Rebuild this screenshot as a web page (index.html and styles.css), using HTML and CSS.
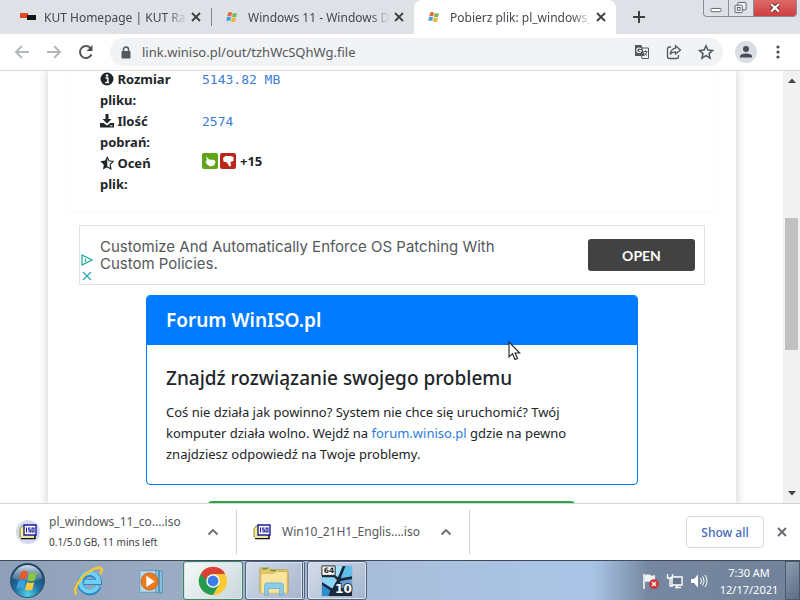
FILE: index.html
```html
<!DOCTYPE html>
<html lang="pl">
<head>
    <meta charset="UTF-8">
    <meta name="viewport" content="width=device-width, initial-scale=1.0">
    <title>Pobierz plik</title>
    <link rel="stylesheet" href="styles.css">
</head>
<body>

    <svg class="defs" width="0" height="0" aria-hidden="true">
        <symbol id="winflag" viewBox="0 0 12 12">
            <path fill="#e8623a" d="M2.2 1.6Q4 .6 6 1.6L5.2 5.4Q3.400 4.500 1.300 5.400z"/>
            <path fill="#7cb856" d="M6.800 2Q8.800 2.900 11 2L10.100 6Q8 6.700 5.900 5.800z"/>
            <path fill="#3ba3dc" d="M1.100 6.200Q3 5.300 5 6.200L4.200 10Q2.300 9.100.2 10z"/>
            <path fill="#f0b440" d="M5.800 6.600Q7.800 7.500 9.900 6.700L9 10.700Q7 11.400 5 10.500z"/>
        </symbol>
        <symbol id="cross" viewBox="0 0 10 10">
            <path d="M1 1l8 8M9 1l-8 8" fill="none" stroke="currentColor" stroke-width="1.800"/>
        </symbol>
        <symbol id="chevron" viewBox="0 0 12 8">
            <path d="M1.500 6.500L6 2l4.500 4.500" fill="none" stroke="currentColor" stroke-width="1.800"/>
        </symbol>
        <symbol id="iso" viewBox="0 0 18 16">
            <path d="M1 5l2-3h4v11H1z" fill="#f5f08a" stroke="#8a8630"/>
            <path d="M2 14.500h14V10" fill="none" stroke="#111" stroke-width="1.500"/>
            <path d="M2 11h13v3H2z" fill="#eeeaa0"/>
            <path d="M5 1h12v10H5z" fill="#fff" stroke="#1a1a9a" stroke-width="1.400"/>
            <path d="M7.500 3.500v5M11.500 4H9.700v2h1.600v2H9.300M13 4h2v4h-2z" fill="none" stroke="#1a1a9a" stroke-width="1.100"/>
        </symbol>
    </svg>

    <!-- tab strip -->
    <header class="tabs">
        <div class="tab">
            <svg class="favicon" viewBox="0 0 16 12"><path fill="#e04a20" d="M0 2h8v5H0z"/><path fill="#111" d="M7 4h9v5H7z"/></svg>
            <span class="tab-title">KUT Homepage | KUT Rad</span>
            <button class="tab-close" aria-label="Close tab"><svg><use href="#cross"/></svg></button>
        </div>
        <div class="tab">
            <svg class="favicon"><use href="#winflag"/></svg>
            <span class="tab-title">Windows 11 - Windows D</span>
            <button class="tab-close" aria-label="Close tab"><svg><use href="#cross"/></svg></button>
        </div>
        <div class="tab active">
            <svg class="favicon"><use href="#winflag"/></svg>
            <span class="tab-title">Pobierz plik: pl_windows_</span>
            <button class="tab-close" aria-label="Close tab"><svg><use href="#cross"/></svg></button>
        </div>
        <button class="new-tab" aria-label="New tab">
            <svg viewBox="0 0 12 12"><path d="M6 0v12M0 6h12" stroke="#3c4043" stroke-width="2"/></svg>
        </button>
        <div class="window-controls">
            <button aria-label="Minimize"><svg viewBox="0 0 26 17"><rect x="7.500" y="9" width="11" height="3.500" rx="1" fill="#fff" stroke="#555b66"/></svg></button>
            <button aria-label="Restore"><svg viewBox="0 0 26 17"><g fill="#f4f5f7" stroke="#555b66"><rect x="9.500" y="2.500" width="9" height="8" rx="1"/><rect x="6.500" y="5.500" width="8" height="8" rx="1"/><rect x="9" y="8" width="3" height="3"/></g></svg></button>
            <button class="close" aria-label="Close"><svg viewBox="0 0 42 17"><path d="M17 4.500l8 7.500M25 4.500l-8 7.500" stroke="#6b2a2a" stroke-width="4.500"/><path d="M17 4.500l8 7.500M25 4.500l-8 7.500" stroke="#fff" stroke-width="2.500"/></svg></button>
        </div>
    </header>

    <!-- address bar -->
    <nav class="toolbar">
        <button class="dim" aria-label="Back"><svg viewBox="0 0 16 16"><path d="M15 8H2M8 2L2 8l6 6"/></svg></button>
        <button class="dim" aria-label="Forward"><svg viewBox="0 0 16 16"><path d="M1 8h13M8 2l6 6-6 6"/></svg></button>
        <button aria-label="Reload"><svg viewBox="0 0 16 16"><path d="M13.500 10.500A6 6 0 1 1 12.800 4.400" stroke-width="2"/><path d="M14.500 1v6h-6z" fill="#4a4d51" stroke="none"/></svg></button>
        <div class="omnibox">
            <svg class="lock" viewBox="0 0 10 13"><path d="M2.500 6V3.500a2.500 2.500 0 0 1 5 0V6" fill="none" stroke="#54575b" stroke-width="1.500"/><rect x="0.500" y="5" width="9" height="7.500" rx="1" fill="#54575b"/></svg>
            <input type="text" aria-label="Address" value="link.winiso.pl/out/tzhWcSQhWg.file">
            <button aria-label="Translate"><svg viewBox="0 0 16 16"><path d="M6 4h8.500v10.500H8z" stroke-width="1"/><path d="M1 1h6.500l3 11H1z" fill="#54575b" stroke="none"/><path d="M7 5A2.300 2.300 0 1 0 7 7.500V6.500H5" stroke="#fff" stroke-width="1.100"/><path d="M9.500 7.500h4M11.500 6.500v1M12.800 7.500q-.5 2.500-2.500 4M10.500 9q1 2 2.500 2.500" stroke-width="1"/></svg></button>
            <button aria-label="Share"><svg viewBox="0 0 16 16"><path d="M5 3H3.500Q1.500 3 1.500 5v7.500q0 2 2 2h7q2 0 2-2V11" stroke-width="1.300"/><path d="M9.500 1.800L14.500 6l-5 4V7.800Q6 7.800 4.200 10.500 4.800 5 9.500 4.200z" stroke-width="1.300"/></svg></button>
            <button aria-label="Bookmark"><svg viewBox="0 0 16 16"><path d="M8 1.800l1.900 4.300 4.600.4-3.500 3.100 1.100 4.600L8 11.700l-4.100 2.500L5 9.600 1.500 6.500l4.600-.4z" stroke-width="1.500"/></svg></button>
        </div>
        <button class="profile" aria-label="Profile"><svg viewBox="0 0 16 16"><circle cx="8" cy="5" r="3" fill="#4a4d55" stroke="none"/><path d="M2 13.500v-1.500Q2.500 9.500 8 9.500t6 2.500v1.500z" fill="#4a4d55" stroke="none"/></svg></button>
        <button class="menu" aria-label="Menu"><svg viewBox="0 0 16 16"><g fill="#4a4d51" stroke="none"><circle cx="8" cy="3" r="1.600"/><circle cx="8" cy="8" r="1.600"/><circle cx="8" cy="13" r="1.600"/></g></svg></button>
    </nav>

    <!-- page -->
    <div class="viewport">
        <main class="page">
            <div class="sheet">
                <section class="file-info">
                    <table>
                        <tr>
                            <th scope="row"><svg viewBox="0 0 14 14"><circle cx="7" cy="7" r="6.500" fill="#212529"/><path d="M5.500 6h2.300v4.500M5.200 10.500h3.900" fill="none" stroke="#fff" stroke-width="1.500"/><circle cx="7" cy="3.500" r="1.200" fill="#fff"/></svg> Rozmiar pliku:</th>
                            <td><code>5143.82 MB</code></td>
                        </tr>
                        <tr>
                            <th scope="row"><svg viewBox="0 0 14 14"><path d="M5.500 0h3v5h3L7 9.500 2.500 5h3zM0 9h3.500L7 11.500 10.500 9H14v4.500H0z" fill="#212529"/><path d="M10 11.800h2.500" stroke="#fff"/></svg> Ilość pobrań:</th>
                            <td><code>2574</code></td>
                        </tr>
                        <tr>
                            <th scope="row"><svg viewBox="0 0 14 14"><path d="M7 .8l1.900 4 4.400.6-3.200 3 .8 4.400L7 10.700" fill="none" stroke="#212529" stroke-width="1.200"/><path d="M7.300.2v11L3 13.500l.8-4.800L.3 5.300l4.800-.7z" fill="#212529"/></svg> Oceń plik:</th>
                            <td class="votes">
                                <button class="up" aria-label="Vote up"><svg viewBox="0 0 16 16"><path fill="#fff" d="M4 3l3 3.500 5.500.5 1 2-1.500 3.500-4 1L4.500 11 3.500 8 5 7.500z"/></svg></button>
                                <button class="down" aria-label="Vote down"><svg viewBox="0 0 16 16"><path fill="#fff" d="M3 5l2.500-2h5L13.500 4v4l-3 1 .5 4-1.500.5L7 9.500 3.500 8.500z"/></svg></button>
                                <b>+15</b>
                            </td>
                        </tr>
                    </table>
                </section>

                <aside class="ad">
                    <div class="ad-marks">
                        <svg viewBox="0 0 12 12"><path d="M1 1l10 5-10 5z M4.500 4.500v3.500" fill="none" stroke="#1aa7a0" stroke-width="1.200"/></svg>
                        <svg viewBox="0 0 12 12"><path d="M2 2l8 8M10 2l-8 8" stroke="#2aa5b8" stroke-width="1.200"/></svg>
                    </div>
                    <p>Customize And Automatically Enforce OS Patching With Custom Policies.</p>
                    <button>OPEN</button>
                </aside>

                <section class="forum">
                    <h2>Forum WinISO.pl</h2>
                    <div class="forum-body">
                        <h3>Znajdź rozwiązanie swojego problemu</h3>
                        <p>Coś nie działa jak powinno? System nie chce się uruchomić? Twój komputer działa wolno. Wejdź na <a href="#">forum.winiso.pl</a> gdzie na pewno znajdziesz odpowiedź na Twoje problemy.</p>
                    </div>
                </section>

                <div class="next-card"></div>
            </div>
        </main>
        <div class="scrollbar">
            <svg viewBox="0 0 8 5"><path d="M0 5l4-4.500L8 5z" fill="#444"/></svg>
            <div class="track"><div class="thumb"></div></div>
            <svg viewBox="0 0 8 5"><path d="M0 0l4 4.500L8 0z" fill="#444"/></svg>
        </div>
        <svg class="cursor" viewBox="0 0 13 20"><path d="M1 1v15l3.500-3.300L7 18.500l2.500-1L7 12h4.800z" fill="#fff" stroke="#222" stroke-width="1.100"/></svg>
    </div>

    <!-- downloads -->
    <footer class="downloads">
        <div class="download">
            <span class="disc"><svg class="iso"><use href="#iso"/></svg></span>
            <div class="download-text">
                <span class="name">pl_windows_11_co....iso</span>
                <small>0.1/5.0 GB, 11 mins left</small>
            </div>
            <button aria-label="More"><svg><use href="#chevron"/></svg></button>
        </div>
        <div class="download">
            <span class="disc plain"><svg class="iso"><use href="#iso"/></svg></span>
            <div class="download-text">
                <span class="name">Win10_21H1_Englis....iso</span>
            </div>
            <button aria-label="More"><svg><use href="#chevron"/></svg></button>
        </div>
        <button class="show-all">Show all</button>
        <button class="close-bar" aria-label="Close downloads"><svg><use href="#cross"/></svg></button>
    </footer>

    <!-- taskbar -->
    <div class="taskbar">
        <button class="start" aria-label="Start">
            <svg viewBox="0 0 38 38">
                <defs>
                    <radialGradient id="orb" cx="50%" cy="90%" r="85%"><stop offset="0" stop-color="#4fd0ec"/><stop offset=".45" stop-color="#1f6f9f"/><stop offset="1" stop-color="#1c3a58"/></radialGradient>
                    <linearGradient id="gloss" x2="0" y2="1"><stop offset="0" stop-color="#e6f2f8" stop-opacity=".9"/><stop offset="1" stop-color="#8fb6cc" stop-opacity=".25"/></linearGradient>
                </defs>
                <circle cx="19" cy="19" r="17.500" fill="url(#orb)" stroke="#33506c"/>
                <path d="M3.500 17a15.600 15.600 0 0 1 31 0Q19 23 3.500 17z" fill="url(#gloss)"/>
                <path fill="#e8582c" d="M12 10.500q4-2.500 7.500-.5l-2 8q-3.500-2-7.500 0z"/>
                <path fill="#8cc63c" d="M21 10.800q4 2 7.500 0l-2 8q-3.500 2-7.500 0z"/>
                <path fill="#3aa0e0" d="M9.500 19.700q4-2 7.500 0l-2 7.800q-3.500-2-7.500.2z"/>
                <path fill="#fcc93a" d="M18.500 20.500q4 2 7.500 0l-2 7.800q-3.500 2-7.500 0z"/>
            </svg>
        </button>
        <button class="task" aria-label="Internet Explorer">
            <svg viewBox="0 0 34 34">
                <path d="M27 22.500A9.800 9.800 0 1 1 27.500 18H12" fill="none" stroke="#2d86c4" stroke-width="6.500"/>
                <path d="M26.500 22.500A9.800 9.800 0 1 1 27.500 18H12" fill="none" stroke="#6fd0f4" stroke-width="4.500"/>
                <path d="M3.500 31C-1 27 8 12 18 6.500 24 2.500 30 1.500 30.500 5q.3 2-1.500 4.500" fill="none" stroke="#f2c636" stroke-width="2.800"/>
            </svg>
        </button>
        <button class="task" aria-label="Media Player">
            <svg viewBox="0 0 34 34">
                <path d="M5 6h21v23H5z" fill="#b9d6e4" stroke="#5d9fc0"/>
                <path d="M22 5l3 1v24l-3-1zM26 6l3 1v23l-3-1z" fill="#8bc3dc" stroke="#4489ab" stroke-width=".8"/>
                <circle cx="15.500" cy="17.500" r="9" fill="#ee7a1c" stroke="#c95f16"/>
                <path d="M12 11.500l9 6-9 6z" fill="#fff"/>
            </svg>
        </button>
        <button class="task open current" aria-label="Chrome">
            <svg viewBox="0 0 34 34">
                <circle cx="17" cy="17" r="15" fill="#fbc934"/>
                <path d="M4 9.500A15 15 0 0 0 17 32l6.500-11.500L17 17z" fill="#259a50"/>
                <path d="M4 9.500L10.500 20.700 17 10z" fill="#259a50"/>
                <path d="M4 9.500A15 15 0 0 1 30 9.500H17a7.500 7.500 0 0 0-7.300 6z" fill="#dc3f33"/>
                <circle cx="17" cy="17" r="7.200" fill="#fff"/><circle cx="17" cy="17" r="5.800" fill="#3f7ee8"/>
            </svg>
        </button>
        <button class="task open stack" aria-label="Explorer">
            <svg viewBox="0 0 34 34">
                <path d="M2 5q0-2 2-2h8l2 2h16q2 0 2 2v22H2z" fill="#e7c765" stroke="#b8953c" stroke-width=".8"/>
                <path d="M5 4h5M13 6h6M22 7h6" stroke="#4f9a60" stroke-width="1.500"/>
                <path d="M3 9h14l2-2h12v23H3z" fill="#f8e6a0" stroke="#d3b35a" stroke-width=".8"/>
                <path d="M7 32V22q0-3 3-3h14q3 0 3 3v10h-4v-7H11v7z" fill="#8cccea" stroke="#5fa9cf" stroke-width=".8"/>
            </svg>
        </button>
        <button class="task open" aria-label="Windows 10 x64">
            <svg viewBox="0 0 34 34">
                <path d="M1 1h32v32H1z" fill="#17293a"/>
                <path d="M18 1h5l-5 12-3-2V1z" fill="#a8e0f8"/>
                <path d="M26 1h7v11L21 14z" fill="#5fbdec"/>
                <path d="M1 13h13l3 3-5 9-11-7z" fill="#8fd6f6"/>
                <path d="M1 21l9 6-2 6H1z" fill="#2a8ed0"/>
                <path d="M21 17l12-2v10l-15-1z" fill="#6c9fd4"/>
                <path d="M1 1h14v10H1z" fill="#fff" stroke="#222"/>
                <text class="badge-64" x="3" y="9">64</text>
                <text class="badge-10" x="15" y="30">10</text>
            </svg>
        </button>
        <div class="tray">
            <svg viewBox="0 0 18 18"><path d="M2 2v15" stroke="#fff" stroke-width="1.500"/><path d="M3 3q3-1.500 5 0t5 0v7q-3 1-5 0t-5 0z" fill="#eef3f8"/><circle cx="12" cy="12" r="4.800" fill="#d5302f"/><path d="M10 10l4 4M14 10l-4 4" stroke="#fff" stroke-width="1.500"/></svg>
            <svg viewBox="0 0 18 18"><path d="M6 5h10v8H6zM9 15.500h6M11 13v2.500" fill="#64748a" stroke="#fff" stroke-width="1.400"/><path d="M1.500 2v4h5V2M4 6v8h3" fill="none" stroke="#fff" stroke-width="1.300"/></svg>
            <svg viewBox="0 0 18 18"><path d="M1 7h3l4-4.500v13L4 11H1z" fill="#fff"/><path d="M10.500 6q2 3 0 6M12.700 4.500q3 4.500 0 9M15 3q4 6 0 12" fill="none" stroke="#fff"/></svg>
        </div>
        <div class="clock"><span>7:30 AM</span><span>12/17/2021</span></div>
        <button class="show-desktop" aria-label="Show desktop"></button>
    </div>

</body>
</html>
```
FILE: styles.css
```css
*, *::before, *::after {
    box-sizing: border-box;
}

body {
    display: flex;
    flex-direction: column;
    height: 100vh;
    margin: 0;
    overflow: hidden;
    font-family: 'Noto Sans', 'Open Sans', sans-serif;
    font-size: 13px;
    color: #212529;
    background-color: white;
}

button {
    display: flex;
    align-items: center;
    justify-content: center;
    flex: none;
    padding: 0;
    border: none;
    background: none;
    font-family: inherit;
    cursor: pointer;
}

.defs {
    position: absolute;
}

/* tab strip */
.tabs {
    position: relative;
    display: flex;
    flex: none;
    height: 34px;
    padding-left: 10px;
    background-color: #dee1e6;
}

.tab {
    display: flex;
    align-items: center;
    width: 202px;
    padding: 0 10px 0 12px;
    font-size: 12px;
    color: #45494e;
}

.tab:first-child {
    border-right: 1px solid #85898f;
    height: 18px;
    padding-left: 10px;
    margin-top: 8px;
}

.tab.active {
    background-color: white;
    border-radius: 8px 8px 0 0;
}

.favicon {
    flex: none;
    width: 16px;
    height: 12px;
    margin-right: 8px;
}

.tab-title {
    flex: 1;
    overflow: hidden;
    white-space: nowrap;
    -webkit-mask-image: linear-gradient(to right, black 86%, transparent);
    mask-image: linear-gradient(to right, black 86%, transparent);
}

.tab-close {
    width: 10px;
    height: 16px;
    margin-left: 4px;
    color: #3c4043;
}

.tab-close svg {
    width: 10px;
    height: 10px;
}

.new-tab {
    width: 46px;
}

.new-tab svg {
    width: 12px;
    height: 12px;
}

.window-controls {
    position: absolute;
    top: 0;
    right: 3px;
    display: flex;
    height: 17px;
    border: 1px solid #8a8e96;
    border-top: none;
    border-radius: 0 0 4px 4px;
    overflow: hidden;
}

.window-controls button {
    width: 25px;
    border-right: 1px solid #8a8e96;
}

.window-controls .close {
    width: 42px;
    border: none;
    background: linear-gradient(#dc6a68, #cf3d40);
}

.window-controls svg {
    width: 100%;
    height: 16px;
}

/* address bar */
.toolbar {
    display: flex;
    flex: none;
    align-items: center;
    height: 37px;
    padding: 0 12px 0 14px;
    border-bottom: 1px solid #d5d7da;
}

.toolbar svg {
    width: 16px;
    height: 16px;
    fill: none;
    stroke: #54575b;
    stroke-width: 2;
}

.toolbar > button {
    width: 16px;
    margin-right: 16px;
}

.toolbar > .dim svg {
    stroke: #b4b7ba;
}

.omnibox {
    display: flex;
    flex: 1;
    align-items: center;
    gap: 16px;
    height: 28px;
    padding: 0 9px 0 11px;
    margin-right: 12px;
    border-radius: 14px;
    background-color: #f1f3f4;
}

.toolbar .lock {
    width: 10px;
    height: 13px;
    stroke: none;
}

.omnibox input {
    flex: 1;
    min-width: 0;
    padding: 0;
    margin-left: -5px;
    border: none;
    outline: none;
    background: none;
    font-family: inherit;
    font-size: 13px;
    color: #54575b;
}

.toolbar > .profile {
    width: 22px;
    height: 22px;
    margin-right: 13px;
    border-radius: 50%;
    background-color: #dadde3;
}

.toolbar > .menu {
    margin-right: 2px;
}

/* page */
.viewport {
    position: relative;
    display: flex;
    flex: 1;
    min-height: 0;
    overflow: hidden;
}

.page {
    flex: 1;
    overflow: hidden;
    padding: 0 47px 0 48px;
}

.sheet {
    min-height: 100%;
    padding: 0 18px;
    box-shadow: 0 0 10px rgba(0, 0, 0, 0.2);
}

.file-info {
    height: 144px;
    padding-left: 33px;
    border: 1px solid #fafafa;
    border-top: none;
}

.file-info table {
    margin-top: -2px;
    border-collapse: collapse;
    line-height: 21px;
}

.file-info th {
    width: 102px;
    padding: 0 24px 0 0;
    text-align: left;
    font-weight: bold;
    vertical-align: top;
}

.file-info th svg {
    width: 14px;
    height: 14px;
    vertical-align: -2px;
}

.file-info td {
    padding: 0;
    vertical-align: top;
}

.file-info code {
    font-family: 'DejaVu Sans Mono', monospace;
    font-size: 13px;
    color: #3b7dd8;
}

.votes {
    display: flex;
    align-items: center;
    gap: 2px;
    height: 16px;
}

.votes button {
    width: 16px;
    height: 16px;
    border-radius: 2px;
}

.votes .up {
    background-color: #5fa517;
}

.votes .down {
    background-color: #b9261c;
}

.votes b {
    margin-left: 2px;
}

.ad {
    display: flex;
    align-items: center;
    height: 60px;
    margin: 12px 13px 10px;
    border: 1px solid #dfe1e5;
}

.ad-marks {
    display: flex;
    flex-direction: column;
    align-self: flex-end;
    gap: 4px;
    width: 20px;
    padding: 0 0 2px 1px;
}

.ad-marks svg {
    width: 12px;
    height: 12px;
}

.ad p {
    flex: 1;
    margin: 0;
    padding-right: 60px;
    font-family: Inter, sans-serif;
    font-size: 15px;
    line-height: 17px;
    color: #55585c;
}

.ad button {
    width: 107px;
    height: 32px;
    margin-right: 9px;
    border-radius: 3px;
    background-color: #424242;
    color: white;
    font-family: Lato, sans-serif;
    font-size: 14px;
    font-weight: bold;
}

.forum {
    margin: 0 80px;
    border: 1px solid #007bff;
    border-radius: 4px;
    overflow: hidden;
}

.forum h2 {
    margin: 0;
    padding: 10px 19px;
    font-size: 19px;
    font-weight: 600;
    line-height: 29px;
    color: white;
    background-color: #007bff;
}

.forum-body {
    padding: 20px 19px 19px;
}

.forum h3 {
    margin: 0 0 11px;
    font-size: 19px;
    font-weight: 500;
    line-height: 26px;
}

.forum p {
    margin: 0;
    line-height: 21px;
}

.forum a {
    color: #2a7de0;
    text-decoration: none;
}

.next-card {
    height: 60px;
    margin: 16px 143px 0 142px;
    border: 2px solid #28a745;
    border-radius: 4px;
}

.scrollbar {
    display: flex;
    flex-direction: column;
    align-items: center;
    width: 17px;
    padding: 7px 0;
    background-color: #f1f1f1;
}

.scrollbar svg {
    width: 8px;
    height: 5px;
}

.track {
    flex: 1;
    width: 13px;
    padding-top: 135px;
}

.thumb {
    height: 132px;
    background-color: #c1c1c1;
}

.cursor {
    position: absolute;
    left: 508px;
    top: 270px;
    width: 13px;
    height: 20px;
}

/* downloads */
.downloads {
    display: flex;
    flex: none;
    align-items: center;
    height: 57px;
    border-top: 1px solid #d3d5d8;
    background-color: white;
}

.download {
    display: flex;
    align-items: center;
    height: 44px;
    padding: 0 16px;
    border-right: 1px solid #cfd1d4;
}

.disc {
    display: flex;
    align-items: center;
    justify-content: center;
    width: 24px;
    height: 24px;
    margin-right: 9px;
    border-radius: 50%;
    background-color: #d5daf3;
}

.disc.plain {
    width: 18px;
    margin-right: 11px;
    background: none;
}

.iso {
    width: 18px;
    height: 16px;
}

.download-text {
    display: flex;
    flex-direction: column;
    width: 148px;
    color: #54575b;
}

.download .name {
    font-size: 12px;
    line-height: 20px;
    white-space: nowrap;
}

.download small {
    font-size: 10px;
    line-height: 20px;
    color: #3c4043;
}

.download button {
    width: 32px;
    height: 24px;
    margin-right: -9px;
    color: #6b6e72;
}

.download button svg {
    width: 12px;
    height: 8px;
}

.show-all {
    width: 78px;
    height: 32px;
    margin-left: auto;
    border: 1px solid #d5d8dd;
    border-radius: 4px;
    color: #3f68b8;
    font-size: 12px;
    font-weight: 500;
}

.close-bar {
    width: 10px;
    margin: 0 13px;
    color: #66696d;
}

.close-bar svg {
    width: 10px;
    height: 10px;
}

/* taskbar */
.taskbar {
    display: flex;
    flex: none;
    height: 40px;
    padding-left: 8px;
    border-top: 1px solid #3d4a60;
    background: linear-gradient(to right, #8f9fb8, #9cadc6 25%, #a9bfdc 50%, #a9c5e6 74%, #7688a1 81%, #71829a);
}

.start {
    width: 38px;
    margin-right: 13px;
}

.start svg {
    width: 37px;
    height: 37px;
}

.task {
    width: 60px;
    margin-right: 2px;
}

.task svg {
    width: 32px;
    height: 32px;
}

.task.open {
    border: 1px solid #53627a;
    border-radius: 3px;
    background: linear-gradient(135deg, #d3dcea, #a5b5cd);
    box-shadow: inset 0 0 0 1px #dbe3ef;
}

.task.current {
    background: linear-gradient(135deg, #f6faf8, #c9d6dc);
    border-color: #3f8c62;
}

.task.stack {
    border-right: 3px double #53627a;
}

.badge-64 {
    font: bold 8px 'DejaVu Sans', sans-serif;
    fill: #222;
}

.badge-10 {
    font: bold 13px 'DejaVu Sans', sans-serif;
    fill: white;
    stroke: #1b2e40;
    stroke-width: 2px;
    paint-order: stroke;
}

.tray {
    display: flex;
    align-items: center;
    gap: 6px;
    margin-left: auto;
}

.tray svg {
    width: 18px;
    height: 18px;
}

.clock {
    display: flex;
    flex-direction: column;
    justify-content: center;
    width: 72px;
    margin-left: 5px;
    font-size: 11px;
    line-height: 17px;
    text-align: center;
    color: white;
}

.show-desktop {
    width: 15px;
    border: 1px solid #4c5a70;
    background: linear-gradient(135deg, #8d9caf, #5d6d84);
}
```
